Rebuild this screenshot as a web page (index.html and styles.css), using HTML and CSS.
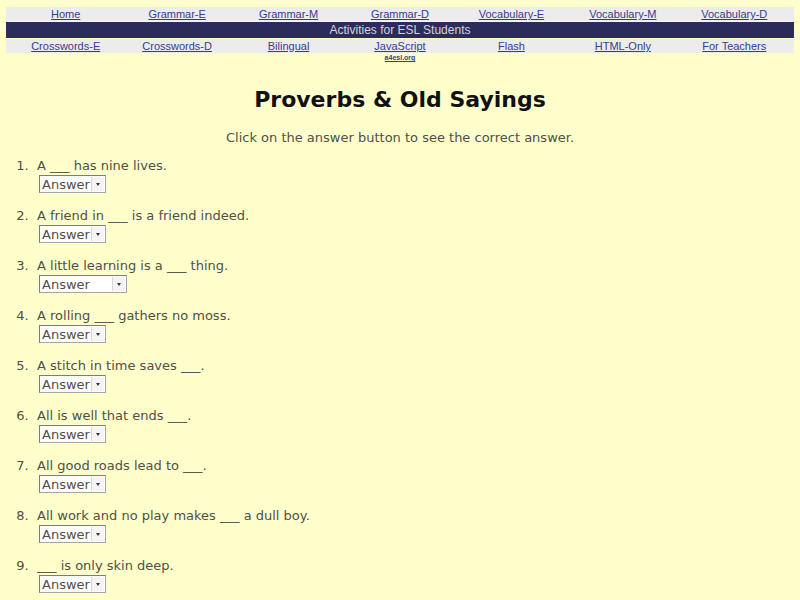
FILE: index.html
```html
<!DOCTYPE html>
<html lang="en">
<head>
<meta charset="utf-8">
<title>Proverbs &amp; Old Sayings</title>
<link rel="stylesheet" href="styles.css">
</head>
<body>
<nav class="nav">
  <div class="nav-row">
    <a href="#">Home</a>
    <a href="#">Grammar-E</a>
    <a href="#">Grammar-M</a>
    <a href="#">Grammar-D</a>
    <a href="#">Vocabulary-E</a>
    <a href="#">Vocabulary-M</a>
    <a href="#">Vocabulary-D</a>
  </div>
  <div class="nav-banner">Activities for ESL Students</div>
  <div class="nav-row">
    <a href="#">Crosswords-E</a>
    <a href="#">Crosswords-D</a>
    <a href="#">Bilingual</a>
    <a href="#">JavaScript</a>
    <a href="#">Flash</a>
    <a href="#">HTML-Only</a>
    <a href="#">For Teachers</a>
  </div>
  <div class="nav-foot">
    <span></span><span></span><span></span>
    <a href="#" class="site">a4esl.org</a>
  </div>
</nav>

<h1 class="title">Proverbs &amp; Old Sayings</h1>
<p class="intro">Click on the answer button to see the correct answer.</p>

<ol class="quiz">
  <li>
    <div class="q">A ___ has nine lives.</div>
    <span class="pick"><select><option>Answer</option><option>cat</option></select><i class="arrow"></i></span>
  </li>
  <li>
    <div class="q">A friend in ___ is a friend indeed.</div>
    <span class="pick"><select><option>Answer</option><option>need</option></select><i class="arrow"></i></span>
  </li>
  <li>
    <div class="q">A little learning is a ___ thing.</div>
    <span class="pick wide"><select><option>Answer</option><option>dangerous</option></select><i class="arrow"></i></span>
  </li>
  <li>
    <div class="q">A rolling ___ gathers no moss.</div>
    <span class="pick"><select><option>Answer</option><option>stone</option></select><i class="arrow"></i></span>
  </li>
  <li>
    <div class="q">A stitch in time saves ___.</div>
    <span class="pick"><select><option>Answer</option><option>nine</option></select><i class="arrow"></i></span>
  </li>
  <li>
    <div class="q">All is well that ends ___.</div>
    <span class="pick"><select><option>Answer</option><option>well</option></select><i class="arrow"></i></span>
  </li>
  <li>
    <div class="q">All good roads lead to ___.</div>
    <span class="pick"><select><option>Answer</option><option>Rome</option></select><i class="arrow"></i></span>
  </li>
  <li>
    <div class="q">All work and no play makes ___ a dull boy.</div>
    <span class="pick"><select><option>Answer</option><option>Jack</option></select><i class="arrow"></i></span>
  </li>
  <li>
    <div class="q">___ is only skin deep.</div>
    <span class="pick"><select><option>Answer</option><option>Beauty</option></select><i class="arrow"></i></span>
  </li>
</ol>
</body>
</html>
```

FILE: styles.css
```css
body {
  margin: 0;
  padding: 7px 6px 0;
  background: #ffffcc;
  font-family: "DejaVu Sans", Verdana, sans-serif;
  color: #4f4f45;
}

/* site navigation table */
.nav {
  font-family: "Liberation Sans", Arial, sans-serif;
  font-size: 11px;
}
.nav-row {
  display: grid;
  grid-template-columns: repeat(7, 1fr);
  background: #ececec;
  height: 14px;
  line-height: 14px;
  padding: 0 4px;
  text-align: center;
}
.nav-row a {
  color: #3a3a8e;
}
.nav-banner {
  background: #2c2c5c;
  color: #d4d4dc;
  font-size: 12px;
  height: 16px;
  line-height: 16px;
  text-align: center;
  margin: 1px 0;
}
.nav-foot {
  display: grid;
  grid-template-columns: repeat(7, 1fr);
  padding: 0 4px;
  text-align: center;
  font-size: 7px;
  line-height: 9px;
}
.nav-foot .site {
  color: #3a3a8e;
  font-weight: bold;
}

.title {
  font-family: "Comic Sans MS", "DejaVu Sans", sans-serif;
  font-weight: bold;
  font-size: 22px;
  color: #111;
  text-align: center;
  margin: 21px 0 0;
  line-height: 34px;
}
.intro {
  text-align: center;
  font-size: 13px;
  margin: 12px 0 0;
  line-height: 18px;
}

/* numbered questions */
.quiz {
  margin: 10px 0 0;
  padding-left: 31px;
  font-size: 13px;
}
.quiz li {
  margin-bottom: 14px;
}
.quiz li::marker {
  content: counter(list-item) ".  ";
}
.q {
  line-height: 18px;
}
.pick {
  position: relative;
  display: inline-block;
  margin-left: 2px;
}
.pick select {
  appearance: none;
  -webkit-appearance: none;
  width: 67px;
  height: 18px;
  border: 1px solid #a5a5a5;
  border-top-color: #7c7c7c;
  border-left-color: #7c7c7c;
  background: #fff;
  font-family: "DejaVu Sans", Verdana, sans-serif;
  font-size: 13px;
  color: #4f4f45;
  padding: 0 0 0 2px;
  border-radius: 0;
  display: block;
}
.pick.wide select {
  width: 88px;
}
.pick .arrow {
  position: absolute;
  right: 2px;
  top: 2px;
  width: 12px;
  height: 14px;
  background: #f4f4f4;
  border-left: 1px solid #d8d8d8;
  pointer-events: none;
}
.pick .arrow::after {
  content: "";
  position: absolute;
  left: 4px;
  top: 6px;
  border-left: 2px solid transparent;
  border-right: 2px solid transparent;
  border-top: 3px solid #333;
}
```
